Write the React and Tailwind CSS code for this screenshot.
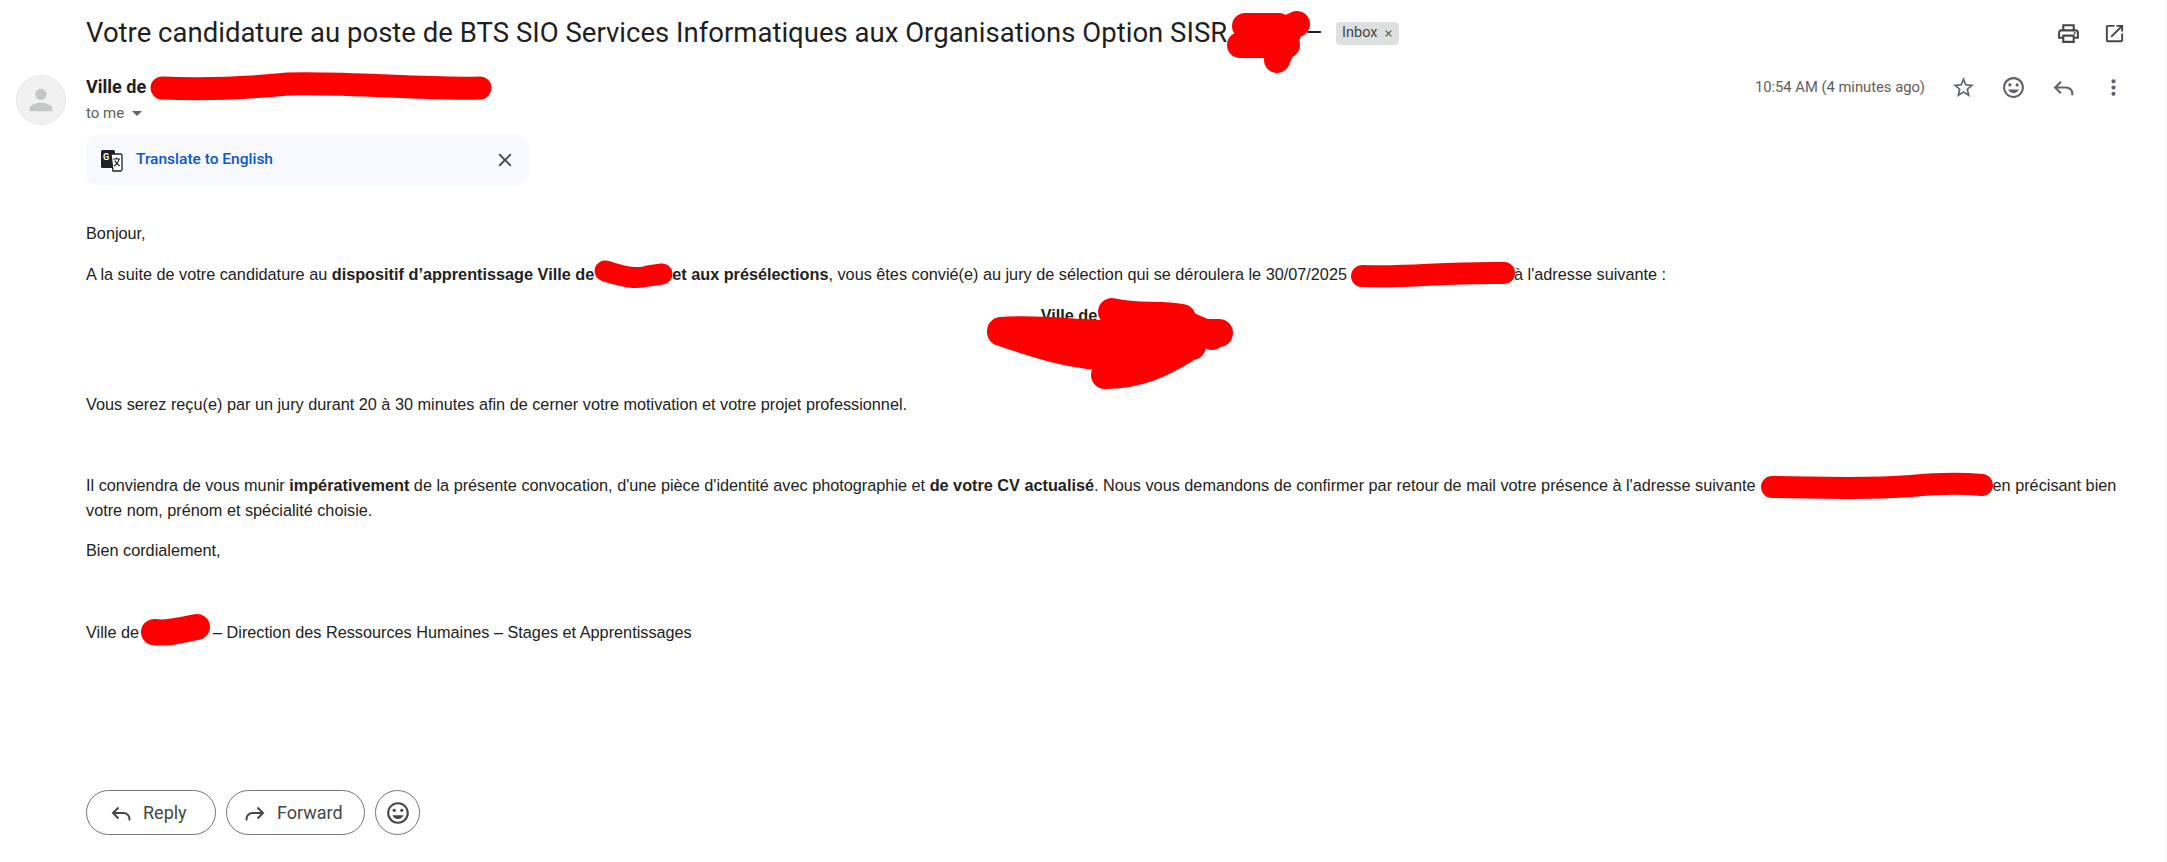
import React from "react";
import { MdOutlinePrint, MdOpenInNew, MdStarBorder, MdOutlineInsertEmoticon, MdMoreVert, MdPerson, MdClose, MdArrowDropDown } from "react-icons/md";

function Reply({ size = 24, flip = false }) {
  return (
    <svg width={size} height={size} viewBox="0 0 24 24" fill="none" stroke="currentColor" strokeWidth="2" style={flip ? { transform: "scaleX(-1)" } : undefined}>
      <path d="M9.5 6.5 4 12l5.5 5.5" />
      <path d="M4 12h10.5a6 6 0 0 1 6 6v1.5" />
    </svg>
  );
}

function Redact({ w, top, vb, d, sw, left = 0 }) {
  return (
    <span className="relative inline-block align-baseline" style={{ width: w, height: 0 }}>
      <svg className="absolute overflow-visible" style={{ left, top, width: vb[0], height: vb[1] }} viewBox={`0 0 ${vb[0]} ${vb[1]}`} fill="none" stroke="#ff0000" strokeWidth={sw} strokeLinecap="round" strokeLinejoin="round">
        <path d={d} />
      </svg>
    </span>
  );
}

function TranslateIcon() {
  return (
    <svg width="23" height="23" viewBox="0 0 23 23">
      <rect x="1" y="1" width="14" height="18" rx="1.5" fill="#202124" />
      <path d="M11 5h9.5a1.5 1.5 0 0 1 1.5 1.5v14a1.5 1.5 0 0 1-1.5 1.5H13l-2-17z" fill="#fff" stroke="#202124" strokeWidth="1.3" />
      <text x="3" y="11" fontSize="9" fontWeight="700" fontFamily="Roboto, sans-serif" fill="#fff">G</text>
      <path d="M13 10h7M16.5 8.5V10M19 10c-.6 3-2.6 5.5-5 7M14.8 11.5c.8 2.2 2.6 4.3 5 5.5" fill="none" stroke="#202124" strokeWidth="1.2" />
    </svg>
  );
}

const PILL = "flex items-center rounded-full border border-[#747775] bg-white h-[45px] text-[#444746] text-[18px] font-normal";
const ICON = "flex w-[50px] justify-center text-[#5f6368]";

export default function App() {
  return (
    <div className="h-[862px] w-full overflow-hidden bg-white border-r border-[#f5f5f5] font-['Roboto',sans-serif]">
      <div className="flex h-[66px] items-center justify-between pl-[86px] pr-[40px]">
        <div className="flex items-center">
          <h1 className="whitespace-nowrap text-[27.5px] leading-[34px] font-normal text-[#1f1f1f] tracking-[0.01px]">
            Votre candidature au poste de BTS SIO Services Informatiques aux Organisations Option SISR
            <Redact w={78} top={-31} vb={[83, 62]} sw={26} d="M18 15 H52 M13 34 H60 M52 22 L70 13 M62 20 L50 49" />
            –
          </h1>
          <span className="ml-[13px] flex h-[23px] w-[63px] items-center justify-center gap-[5px] rounded-[4px] bg-[#dde0de] text-[14.5px] text-[#444746]">
            Inbox <MdClose size={11} />
          </span>
        </div>
        <div className="flex items-center gap-[22px] text-[#444746]">
          <MdOutlinePrint size={25} />
          <MdOpenInNew size={23} />
        </div>
      </div>

      <div className="flex">
        <div className="w-[86px] shrink-0 pl-4 pt-[9px]">
          <div className="flex h-[50px] w-[50px] items-center justify-center rounded-full border border-[#e8e8e8] bg-[#f1f1f1] text-[#c4c7c5]">
            <MdPerson size={34} />
          </div>
        </div>

        <div className="min-w-0 flex-1">
          <div className="flex items-start justify-between pr-[28px] pt-[9px]">
            <div>
              <div className="h-[24px] text-[18px] leading-[24px] font-bold text-[#1f1f1f]">
                Ville de
                <Redact w={300} top={-20} vb={[342, 27]} sw={23} left={2} d="M14 15 C60 17 100 15 140 11 C200 9 280 17 332 15" />
              </div>
              <div className="mt-[3px] flex h-[22px] items-center text-[15px] text-[#5e5e5e]">
                to me
                <MdArrowDropDown size={24} className="ml-[1px] text-[#5f6368]" />
              </div>
            </div>
            <div className="flex items-center">
              <span className="mr-[13px] text-[14.75px] text-[#5e5e5e]">10:54 AM (4 minutes ago)</span>
              <span className={ICON}><MdStarBorder size={25} /></span>
              <span className={ICON}><MdOutlineInsertEmoticon size={25} /></span>
              <span className={ICON}><Reply size={25} /></span>
              <span className={ICON}><MdMoreVert size={25} /></span>
            </div>
          </div>

          <div className="mt-[11px] flex h-[50px] w-[443px] items-center justify-between rounded-[12px] bg-[#f8f9fe] pl-[14px] pr-[13px]">
            <div className="flex items-center gap-[13px]">
              <TranslateIcon />
              <span className="text-[15.5px] font-medium text-[#0b57d0]">Translate to English</span>
            </div>
            <MdClose size={22} className="text-[#444746]" />
          </div>

          <div className="pr-[36px] pt-[38px] text-[16.25px] leading-[20px] text-[#222222] font-['Liberation_Sans',sans-serif]">
            <p>Bonjour,</p>
            <p className="mt-[21px]">
              A la suite de votre candidature au <b>dispositif d’apprentissage Ville de</b>
              <Redact w={78} top={-20} vb={[80, 29]} sw={21} d="M11 11 C30 16 40 20 54 16 L68 14" />
              <b>et aux présélections</b>, vous êtes convié(e) au jury de sélection qui se déroulera le 30/07/2025
              <Redact w={167} top={-18} vb={[164, 25]} left={4} sw={22} d="M11 14 C60 16 90 10 153 11" />
              à l'adresse suivante :
            </p>
            <div className="mt-[21px] h-[69px] text-center">
              <b className="mr-[78px]">Ville de</b>
              <span className="relative block h-0">
                <svg className="absolute left-[901px] top-[-27px] overflow-visible" width="246" height="89" viewBox="0 0 246 89" fill="none" stroke="#ff0000" strokeWidth="28" strokeLinecap="round" strokeLinejoin="round">
                  <path d="M14 33 C50 30 90 36 120 36 M14 34 C50 46 90 60 130 58 M125 14 C150 20 170 16 195 20 M118 77 C150 77 175 66 200 50 M120 35 H232 M110 48 H205 M195 25 L225 38" />
                </svg>
              </span>
            </div>
            <p className="mt-[20px]">Vous serez reçu(e) par un jury durant 20 à 30 minutes afin de cerner votre motivation et votre projet professionnel.</p>
            <p className="mt-[59px] leading-[25px]">
              Il conviendra de vous munir <b>impérativement</b> de la présente convocation, d'une pièce d'identité avec photographie et <b>de votre CV actualisé</b>. Nous vous demandons de confirmer par retour de mail votre présence à l'adresse suivante
              <Redact w={237} top={-19} vb={[232, 26]} left={5} sw={22} d="M11 15 C50 15 100 18 150 14 C180 11 200 11 221 13" />
              en précisant bien votre nom, prénom et spécialité choisie.
            </p>
            <p className="mt-[17px]">Bien cordialement,</p>
            <p className="mt-[62px]">
              Ville de
              <Redact w={74} top={-24} vb={[69, 31]} left={2} sw={26} d="M13 18 C28 20 40 16 56 13" />
              – Direction des Ressources Humaines – Stages et Apprentissages
            </p>
          </div>

          <div className="mt-[148px] flex gap-[10px]">
            <button className={`${PILL} w-[130px] pl-[22px] gap-[10px]`}><Reply size={24} />Reply</button>
            <button className={`${PILL} w-[139px] pl-[16px] gap-[10px]`}><Reply size={24} flip />Forward</button>
            <button className={`${PILL} w-[45px] justify-center text-[#1f1f1f]`}><MdOutlineInsertEmoticon size={26} /></button>
          </div>
        </div>
      </div>
    </div>
  );
}
